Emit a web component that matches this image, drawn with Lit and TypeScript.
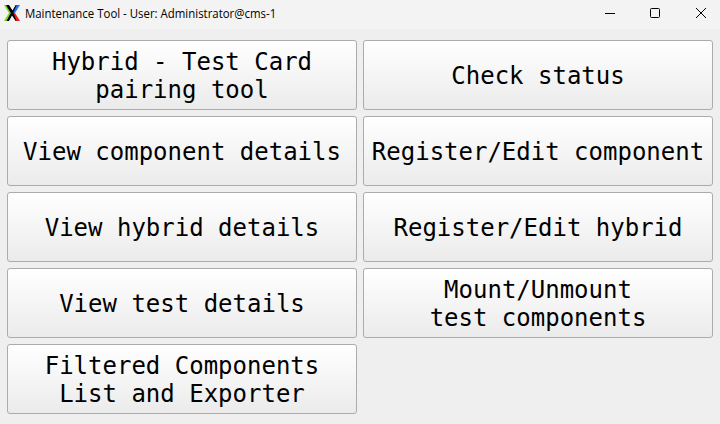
import { LitElement, html, css } from "lit";
import { customElement, property } from "lit/decorators.js";

@customElement("title-bar")
class TitleBar extends LitElement {
  @property() label = "";
  static styles = css`
    :host { display: flex; height: 29px; background: #f3f3f3; align-items: flex-start; }
    .logo { width: 16px; height: 16px; margin: 5px 5px 0 4px; flex: none; }
    .label { flex: 1; padding-top: 6px; font: 12px/16px "Open Sans", "Noto Sans", sans-serif; color: #000; white-space: nowrap; transform: scaleX(0.952); transform-origin: 0 0; }
    .controls { display: flex; }
    .control { width: 46px; height: 28px; }
  `;
  render() {
    return html`
      <svg class="logo" viewBox="0 0 16 16">
        <path d="M12 0H16L11 8H8z" fill="#2a72f5" />
        <path d="M8 8H11L16 16H12z" fill="#f01c1c" />
        <path d="M0 0H3L7 8L3.500 16H0L5 8z" fill="#76d21e" />
        <path d="M2 0H5L8.500 5.500L11.700 0H12.700L9.300 7.500L12.500 16H11.700L8 10.500L5 16H2.500L6.800 8z" fill="#000" />
      </svg>
      <div class="label">${this.label}</div>
      <div class="controls">
        <svg class="control" viewBox="0 0 46 28"><path d="M23 13.500h10" stroke="#000" /></svg>
        <svg class="control" viewBox="0 0 46 28"><rect x="22.500" y="8.500" width="9" height="9" rx="1" fill="none" stroke="#000" /></svg>
        <svg class="control" viewBox="0 0 46 28"><path d="M22 8l10 10M32 8l-10 10" stroke="#000" /></svg>
      </div>`;
  }
}

@customElement("tool-button")
class ToolButton extends LitElement {
  @property({ attribute: false }) lines: string[] = [];
  static styles = css`
    :host { display: block; }
    .button {
      box-sizing: border-box; width: 100%; height: 70px; padding: 2px 0 0; margin: 0; display: block;
      border: 1px solid #ababab; border-radius: 3px;
      background: linear-gradient(#ffffff, #ebebeb);
      font: 24px/28px "DejaVu Sans Mono", monospace; color: #000; text-align: center; white-space: nowrap;
    }
    .line { display: block; }
  `;
  render() {
    return html`<button class="button">${this.lines.map((l) => html`<span class="line">${l}</span>`)}</button>`;
  }
}

@customElement("app-root")
class AppRoot extends LitElement {
  static styles = css`
    :host { display: block; width: 720px; height: 424px; background: #efefef; overflow: hidden; }
    .grid { display: grid; grid-template-columns: 350px 350px; gap: 6px; padding: 11px 7px; }
  `;
  private actions = [
    ["Hybrid - Test Card", "pairing tool"],
    ["Check status"],
    ["View component details"],
    ["Register/Edit component"],
    ["View hybrid details"],
    ["Register/Edit hybrid"],
    ["View test details"],
    ["Mount/Unmount", "test components"],
    ["Filtered Components", "List and Exporter"],
  ];
  render() {
    return html`
      <title-bar .label=${"Maintenance Tool - User: Administrator@cms-1"}></title-bar>
      <main class="grid">${this.actions.map((a) => html`<tool-button .lines=${a}></tool-button>`)}</main>`;
  }
}
